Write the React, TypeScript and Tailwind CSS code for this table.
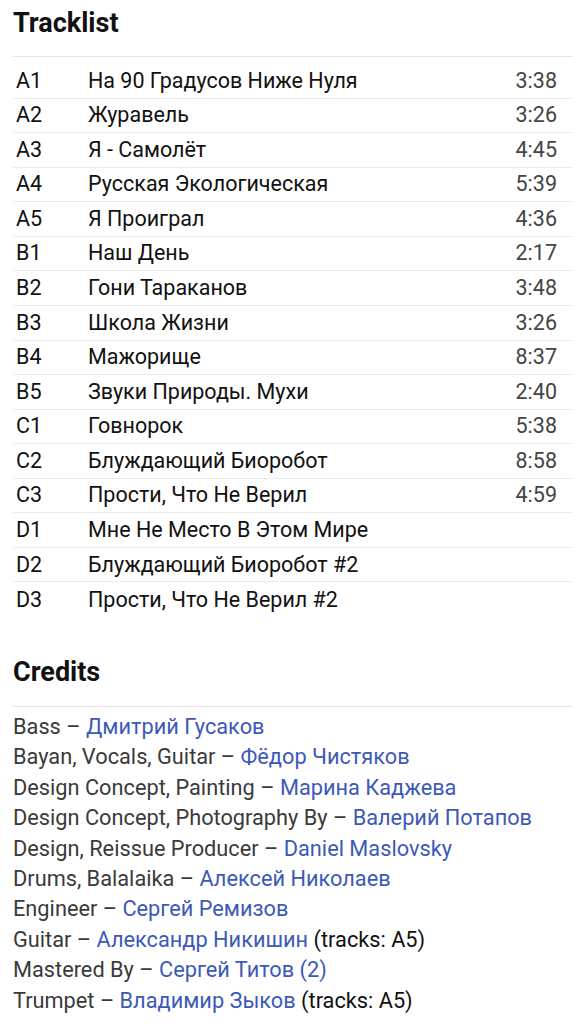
import React from "react";

type Track = { pos: string; title: string; duration?: string };

const tracks: Track[] = [
  { pos: "A1", title: "На 90 Градусов Ниже Нуля", duration: "3:38" },
  { pos: "A2", title: "Журавель", duration: "3:26" },
  { pos: "A3", title: "Я - Самолёт", duration: "4:45" },
  { pos: "A4", title: "Русская Экологическая", duration: "5:39" },
  { pos: "A5", title: "Я Проиграл", duration: "4:36" },
  { pos: "B1", title: "Наш День", duration: "2:17" },
  { pos: "B2", title: "Гони Тараканов", duration: "3:48" },
  { pos: "B3", title: "Школа Жизни", duration: "3:26" },
  { pos: "B4", title: "Мажорище", duration: "8:37" },
  { pos: "B5", title: "Звуки Природы. Мухи", duration: "2:40" },
  { pos: "C1", title: "Говнорок", duration: "5:38" },
  { pos: "C2", title: "Блуждающий Биоробот", duration: "8:58" },
  { pos: "C3", title: "Прости, Что Не Верил", duration: "4:59" },
  { pos: "D1", title: "Мне Не Место В Этом Мире" },
  { pos: "D2", title: "Блуждающий Биоробот #2" },
  { pos: "D3", title: "Прости, Что Не Верил #2" },
];

type Credit = { role: string; name: string; note?: string };

const credits: Credit[] = [
  { role: "Bass", name: "Дмитрий Гусаков" },
  { role: "Bayan, Vocals, Guitar", name: "Фёдор Чистяков" },
  { role: "Design Concept, Painting", name: "Марина Каджева" },
  { role: "Design Concept, Photography By", name: "Валерий Потапов" },
  { role: "Design, Reissue Producer", name: "Daniel Maslovsky" },
  { role: "Drums, Balalaika", name: "Алексей Николаев" },
  { role: "Engineer", name: "Сергей Ремизов" },
  { role: "Guitar", name: "Александр Никишин", note: "(tracks: A5)" },
  { role: "Mastered By", name: "Сергей Титов (2)" },
  { role: "Trumpet", name: "Владимир Зыков", note: "(tracks: A5)" },
];

export default function App() {
  return (
    <main className="min-h-screen bg-white px-[13px] font-['Roboto',sans-serif] text-[#111]">
      <section>
        <h2 className="border-b border-[#e6e6e6] pt-[6px] pb-[16px] text-[27px] font-bold leading-[34px]">
          Tracklist
        </h2>
        <div className="pt-[7px]">
          {tracks.map((t) => (
            <div
              key={t.pos}
              className="flex h-[34.57px] items-center border-b border-[#ececec] text-[21.5px] last:border-b-0"
            >
              <span className="w-[75px] pl-[3px]">{t.pos}</span>
              <span className="flex-1">{t.title}</span>
              <span className="pr-[16px] text-[#444]">{t.duration}</span>
            </div>
          ))}
        </div>
      </section>

      <section className="mt-[38px]">
        <h2 className="border-b border-[#e6e6e6] pb-[17px] text-[27px] font-bold leading-[34px]">Credits</h2>
        <div className="pt-[5px]">
          {credits.map((c) => (
            <div key={c.role} className="text-[21.75px] leading-[30.4px] text-[#3a3a3a]">
              {c.role} – <a className="text-[#3c59b8]">{c.name}</a>
              {c.note && <span className="text-[#111]"> {c.note}</span>}
            </div>
          ))}
        </div>
      </section>
    </main>
  );
}
